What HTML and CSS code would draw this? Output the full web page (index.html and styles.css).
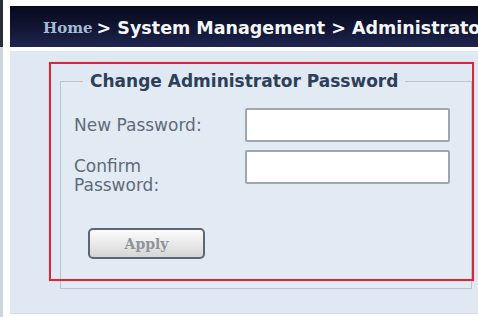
FILE: index.html
```html
<!DOCTYPE html>
<html>
<head>
<meta charset="utf-8">
<link rel="stylesheet" href="styles.css">
</head>
<body>
<div class="page">
  <div class="edge"></div>
  <div class="main">
    <div class="crumb"><span class="home">Home</span><span class="path">&gt; System Management &gt; Administrator</span></div>
    <div class="panel">
      <fieldset class="box">
        <legend>Change Administrator Password</legend>
        <div class="form">
          <label class="lbl lbl-one">New Password:</label>
          <input class="field" type="password">
          <label class="lbl">Confirm<br>Password:</label>
          <input class="field" type="password">
        </div>
        <button class="apply" type="button">Apply</button>
      </fieldset>
      <div class="highlight"></div>
    </div>
  </div>
</div>
</body>
</html>
```
FILE: styles.css
```css
html, body {
  margin: 0;
  padding: 0;
  background: #ffffff;
  width: 478px;
  height: 317px;
  overflow: hidden;
}
.page {
  display: flex;
  height: 317px;
}
.edge {
  width: 3px;
  background: linear-gradient(#2a2d38 0, #2a2d38 47px, #cfd5dc 47px, #cfd5dc 100%);
  flex: none;
}
.main {
  flex: 1;
  margin-left: 7px;
  padding-top: 6px;
  display: flex;
  flex-direction: column;
  min-width: 0;
}
.crumb {
  height: 41px;
  box-sizing: border-box;
  padding: 3px 0 0 33px;
  background: linear-gradient(#080a1c, #121634 55%, #1f2550);
  display: flex;
  align-items: center;
  white-space: nowrap;
  overflow: hidden;
  font-weight: bold;
}
.home {
  font-family: "DejaVu Serif", "Liberation Serif", serif;
  font-size: 15px;
  color: #a3bcd4;
  margin-right: 4px;
}
.path {
  font-family: "DejaVu Sans", Verdana, sans-serif;
  font-size: 17.5px;
  color: #f4f6fa;
}
.panel {
  position: relative;
  margin-top: 4px;
  height: 262px;
  background: #dfe8f3;
  border-bottom: 1px solid #d2dbe6;
}
.box {
  margin: 20px 0 0 50px;
  width: 412px;
  height: 218px;
  box-sizing: border-box;
  border: 1px solid #b8c5d3;
  padding: 0;
  background: #e2eaf4;
}
.box legend {
  margin-left: 22px;
  padding: 0 7px;
  font-family: "DejaVu Sans", Tahoma, sans-serif;
  font-weight: bold;
  font-size: 17px;
  color: #2d4059;
}
.form {
  display: grid;
  grid-template-columns: 171px 205px;
  row-gap: 8px;
  padding: 17px 0 0 13px;
}
.lbl {
  font-family: "DejaVu Sans", Tahoma, sans-serif;
  font-size: 17px;
  color: #5f6a78;
  line-height: 19px;
  padding-top: 7px;
}
.lbl-one {
  padding-top: 8px;
}
.field {
  height: 34px;
  box-sizing: border-box;
  border: 2px solid #a0a6ad;
  border-radius: 2px;
  background: #ffffff;
  margin: 0;
}
.apply {
  display: block;
  margin: 33px 0 0 27px;
  width: 117px;
  height: 31px;
  border: 2px solid #5d6773;
  border-radius: 5px;
  background: linear-gradient(#fbfbfb, #e6e6e6 60%, #d4d4d4);
  font-family: "DejaVu Serif", "Liberation Serif", serif;
  font-size: 14px;
  font-weight: bold;
  color: #8f949b;
  padding: 0;
}
.highlight {
  position: absolute;
  left: 39px;
  top: 11px;
  width: 425px;
  height: 219px;
  box-sizing: border-box;
  border: 2px solid #d22a3c;
  box-shadow: 0 0 1px #f09aa4;
  pointer-events: none;
}
```
